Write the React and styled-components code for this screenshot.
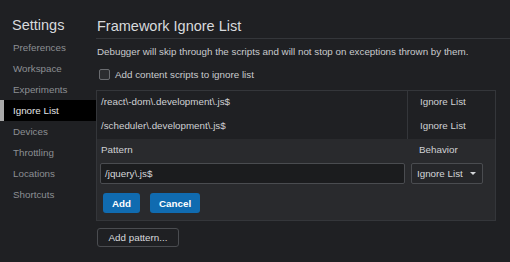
import React from "react";
import styled, { createGlobalStyle } from "styled-components";

const navItems = [
  "Preferences",
  "Workspace",
  "Experiments",
  "Ignore List",
  "Devices",
  "Throttling",
  "Locations",
  "Shortcuts",
];

const patterns = ["/react\\-dom\\.development\\.js$", "/scheduler\\.development\\.js$"];

const GlobalStyle = createGlobalStyle`
  html, body {
    margin: 0;
    padding: 0;
    background: #1f2023;
  }
  body {
    font-family: "Liberation Sans", Arial, sans-serif;
    font-size: 9.8px;
    color: #d4d6d9;
  }
`;

export default function App() {
  return (
    <>
      <GlobalStyle />
      <Page>
        <Sidebar>
          <SideTitle>Settings</SideTitle>
          {navItems.map((item) => (
            <NavItem key={item} selected={item === "Ignore List"}>
              {item}
            </NavItem>
          ))}
        </Sidebar>
        <Main>
          <Header>Framework Ignore List</Header>
          <Desc>Debugger will skip through the scripts and will not stop on exceptions thrown by them.</Desc>
          <CheckRow>
            <Check />
            <span>Add content scripts to ignore list</span>
          </CheckRow>
          <Table>
            {patterns.map((p) => (
              <Row key={p}>
                <Cell>{p}</Cell>
                <Cell divided>Ignore List</Cell>
              </Row>
            ))}
            <EditPanel>
              <Row>
                <Cell>Pattern</Cell>
                <Cell>Behavior</Cell>
              </Row>
              <Fields>
                <Input>/jquery\.js$</Input>
                <Select>
                  <span>Ignore List</span>
                  <Caret />
                </Select>
              </Fields>
              <Buttons>
                <Primary>Add</Primary>
                <Primary>Cancel</Primary>
              </Buttons>
            </EditPanel>
          </Table>
          <Secondary>Add pattern...</Secondary>
        </Main>
      </Page>
    </>
  );
}

const Page = styled("div")`
  display: flex;
  height: 262px;
  overflow: hidden;
`;

const Sidebar = styled("div")`
  width: 96px;
  flex-shrink: 0;
  display: flex;
  flex-direction: column;
`;

const SideTitle = styled("div")`
  height: 37px;
  padding-left: 12px;
  box-sizing: border-box;
  padding-top: 16px;
  font-size: 14.5px;
  line-height: 18px;
  color: #d8dadd;
`;

const NavItem = styled("div")`
  height: 21px;
  line-height: 21px;
  padding-left: 13px;
  color: ${(p) => (p.selected ? "#e2e4e6" : "#8c8f93")};
  background: ${(p) => (p.selected ? "#000" : "transparent")};
  box-shadow: ${(p) => (p.selected ? "inset 4px 0 0 #a8a8a8" : "none")};
`;

const Main = styled("div")`
  flex: 1;
  display: flex;
  flex-direction: column;
  align-items: flex-start;
`;

const Header = styled("div")`
  align-self: stretch;
  height: 39px;
  box-sizing: border-box;
  border-bottom: 1px solid #34363a;
  padding-top: 17px;
  padding-left: 1px;
  font-size: 14.5px;
  line-height: 18px;
  color: #d8dadd;
`;

const Desc = styled("div")`
  padding-top: 6px;
  padding-left: 1px;
  line-height: 14px;
  color: #c9cbce;
`;

const CheckRow = styled("div")`
  display: flex;
  align-items: center;
  gap: 5px;
  margin-top: 8px;
  margin-left: 3px;
  height: 14px;
  color: #c9cbce;
`;

const Check = styled("span")`
  width: 9px;
  height: 9px;
  border: 1px solid #6a6c70;
  border-radius: 2px;
  background: #2c2d30;
`;

const Table = styled("div")`
  margin-top: 9px;
  width: 400px;
  box-sizing: border-box;
  border: 1px solid #34363a;
`;

const Row = styled("div")`
  display: grid;
  grid-template-columns: 310px 88px;
  height: 24px;
`;

const Cell = styled("div")`
  padding: 4px 0 0 ${(p) => (p.divided ? "11px" : "4px")};
  line-height: 14px;
  color: #cfd1d4;
  border-left: ${(p) => (p.divided ? "1px solid #34363a" : "none")};
  box-sizing: border-box;
  &:nth-child(2) {
    padding-left: 12px;
  }
`;

const EditPanel = styled("div")`
  background: #292a2d;
  padding-bottom: 7px;
`;

const Fields = styled("div")`
  display: flex;
  gap: 6px;
  padding: 0 0 0 3px;
`;

const Input = styled("div")`
  width: 305px;
  height: 21px;
  box-sizing: border-box;
  border: 1px solid #4a4c50;
  border-radius: 2px;
  background: #1b1c1e;
  padding-left: 4px;
  line-height: 19px;
  color: #d4d6d9;
`;

const Select = styled("div")`
  width: 72px;
  height: 21px;
  box-sizing: border-box;
  border: 1px solid #4a4c50;
  border-radius: 2px;
  background: #252629;
  display: flex;
  align-items: center;
  justify-content: space-between;
  padding: 0 6px 0 5px;
  color: #d4d6d9;
`;

const Caret = styled("span")`
  width: 0;
  height: 0;
  border-left: 3px solid transparent;
  border-right: 3px solid transparent;
  border-top: 3px solid #d4d6d9;
`;

const Buttons = styled("div")`
  display: flex;
  gap: 10px;
  margin-top: 9px;
  padding-left: 6px;
`;

const Primary = styled("button")`
  height: 20px;
  padding: 0 9px;
  min-width: 37px;
  border: none;
  border-radius: 3px;
  background: #106bb0;
  color: #fff;
  font-family: "Liberation Sans", Arial, sans-serif;
  font-size: 9.8px;
  font-weight: 700;
`;

const Secondary = styled("button")`
  margin-top: 7px;
  margin-left: 1px;
  height: 19px;
  width: 82px;
  padding: 0;
  border: 1px solid #4a4c50;
  border-radius: 3px;
  background: transparent;
  color: #d8dadd;
  font-family: "Liberation Sans", Arial, sans-serif;
  font-size: 9.8px;
`;
